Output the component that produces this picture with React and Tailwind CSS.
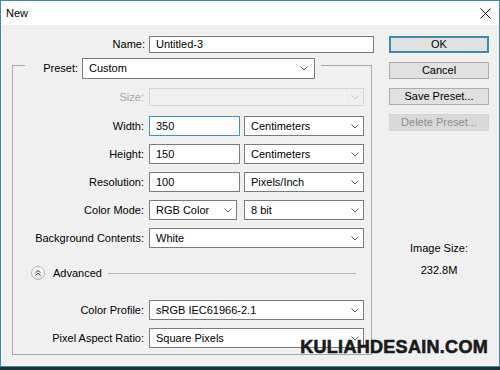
import React from "react";

const Chevron = ({ color = "#5a5a5a" }) => (
  <svg width="8" height="5" viewBox="0 0 8 5" className="shrink-0">
    <polyline points="0.5,0.5 4,4 7.5,0.5" fill="none" stroke={color} strokeWidth="1" />
  </svg>
);

const Select = ({ value, className = "" }) => (
  <div
    className={`flex h-[20px] items-center justify-between border border-[#7a7a7a] bg-white pl-[6px] pr-[4px] ${className}`}
  >
    <span className="truncate">{value}</span>
    <Chevron />
  </div>
);

const Input = ({ value, focused, className = "" }) => (
  <div
    className={`flex h-[20px] items-center border bg-white pl-[6px] ${
      focused ? "border-[#3d93b8]" : "border-[#7a7a7a]"
    } ${className}`}
  >
    {value}
  </div>
);

const Row = ({ label, children, className = "" }) => (
  <div className={`flex items-center ${className}`}>
    <div className="w-[132px] pr-[1px] text-right whitespace-nowrap">{label}</div>
    <div className="ml-[4px] flex gap-[4px]">{children}</div>
  </div>
);

const Button = ({ children, focused, disabled }) => (
  <button
    className={`flex h-[17px] w-[100px] items-center justify-center border ${
      disabled
        ? "border-[#d4d4d4] bg-[#d9d9d9] text-[#8f8f8f]"
        : focused
        ? "border-[#3a8caf] bg-[#e1e1e1] shadow-[inset_0_0_0_1px_#3a8caf]"
        : "border-[#adadad] bg-[#e1e1e1]"
    }`}
  >
    {children}
  </button>
);

export default function App() {
  return (
    <div className="h-[370px] w-[500px] bg-[#1b3239] font-['Liberation_Sans',Arial,sans-serif] text-[11px] text-black">
      <div className="relative flex h-[367px] flex-col border border-[#3a8c9e] bg-[#f0f0f0]">
        {/* title bar */}
        <div className="flex h-[24px] items-center justify-between bg-white pl-[5px] pr-[8px]">
          <span>New</span>
          <svg width="11" height="11" viewBox="0 0 11 11">
            <path d="M0.5 0.5 L10.5 10.5 M10.5 0.5 L0.5 10.5" stroke="#111" strokeWidth="1" />
          </svg>
        </div>

        <div className="flex flex-1">
          {/* left side */}
          <div className="w-[374px]">
            <div className="mt-[11px] flex h-[17px] items-center">
              <div className="w-[144px] text-right">Name:</div>
              <div className="ml-[4px] flex h-[17px] w-[225px] items-center border border-[#7a7a7a] bg-white pl-[6px]">
                Untitled-3
              </div>
            </div>

            <fieldset className="ml-[11px] -mt-[2px] w-[360px] border border-[#a9a9a9] px-0 pt-[9px] pb-[6px]">
              <legend className="ml-[12px] pt-[7px] pr-[6px]">
                <div className="flex items-center">
                  <div className="w-[53px] text-right">Preset:</div>
                  <div className="ml-[4px] flex h-[21px] w-[233px] items-center justify-between border border-[#7a7a7a] bg-white pl-[6px] pr-[6px]">
                    <span>Custom</span>
                    <Chevron />
                  </div>
                </div>
              </legend>

              <Row label={<span className="text-[#a8a8a8]">Size:</span>}>
                <div className="flex h-[18px] w-[215px] items-center justify-end border border-[#d6d6d6] bg-[#f0f0f0] pr-[4px]">
                  <div className="mr-[6px] h-full w-[1px] bg-[#f6f6f6]" />
                  <Chevron color="#c4c4c4" />
                </div>
              </Row>

              <Row label="Width:" className="mt-[10px]">
                <Input value="350" focused className="w-[91px]" />
                <Select value="Centimeters" className="w-[120px]" />
              </Row>
              <Row label="Height:" className="mt-[8px]">
                <Input value="150" className="w-[91px]" />
                <Select value="Centimeters" className="w-[120px]" />
              </Row>
              <Row label="Resolution:" className="mt-[8px]">
                <Input value="100" className="w-[91px]" />
                <Select value="Pixels/Inch" className="w-[120px]" />
              </Row>
              <Row label="Color Mode:" className="mt-[8px]">
                <Select value="RGB Color" className="w-[88px]" />
                <Select value="8 bit" className="ml-[3px] w-[120px]" />
              </Row>
              <Row label="Background Contents:" className="mt-[8px]">
                <Select value="White" className="w-[215px]" />
              </Row>

              <div className="mt-[18px] flex h-[14px] items-center pl-[18px] pr-[15px]">
                <div className="flex h-[14px] w-[14px] items-center justify-center rounded-full border border-[#b4b4b4] bg-gradient-to-b from-white to-[#e4e4e4]">
                  <svg width="6" height="6" viewBox="0 0 6 6">
                    <polyline points="0.5,2.8 3,0.5 5.5,2.8" fill="none" stroke="#333" strokeWidth="1" />
                    <polyline points="0.5,5.5 3,3.2 5.5,5.5" fill="none" stroke="#333" strokeWidth="1" />
                  </svg>
                </div>
                <span className="ml-[8px]">Advanced</span>
                <div className="ml-[6px] h-[1px] flex-1 bg-[#b8b8b8]" />
              </div>

              <Row label="Color Profile:" className="mt-[20px]">
                <Select value="sRGB IEC61966-2.1" className="w-[215px]" />
              </Row>
              <Row label="Pixel Aspect Ratio:" className="mt-[8px]">
                <Select value="Square Pixels" className="w-[215px]" />
              </Row>
            </fieldset>
          </div>

          {/* right side */}
          <div className="pl-[14px]">
            <div className="mt-[11px] flex flex-col gap-[9px]">
              <Button focused>OK</Button>
              <Button>Cancel</Button>
              <Button>Save Preset...</Button>
              <Button disabled>Delete Preset...</Button>
            </div>
            <div className="mt-[110px] w-[100px] text-center leading-[14px]">
              <div>Image Size:</div>
              <div className="mt-[8px]">232.8M</div>
            </div>
          </div>
        </div>

        <div className="absolute right-[11px] bottom-[5px] text-[18px] font-black tracking-[0.3px] text-[#1a1a1a] [-webkit-text-stroke:0.6px_#1a1a1a]">
          KULIAHDESAIN.COM
        </div>
      </div>
    </div>
  );
}
